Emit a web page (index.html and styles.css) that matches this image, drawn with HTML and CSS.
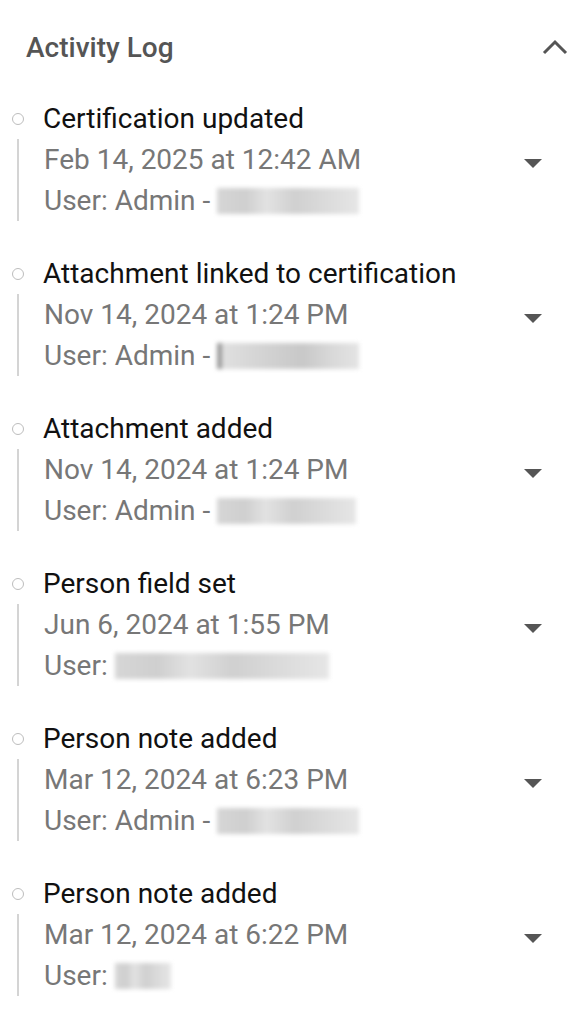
FILE: index.html
```html
<!DOCTYPE html>
<html lang="en">

<head>
    <meta charset="UTF-8">
    <meta name="viewport" content="width=device-width, initial-scale=1.0">
    <title>Activity Log</title>
    <link rel="stylesheet" href="styles.css">
</head>

<body>
    <section class="panel">
        <div class="panel-head">
            <h2>Activity Log</h2>
            <svg class="chevron" width="26" height="16" viewBox="0 0 26 16">
                <path d="M2 14 L13 3 L24 14" fill="none" stroke="#555" stroke-width="3" />
            </svg>
        </div>

        <ul class="log">
            <li class="entry">
                <div class="entry-title"><span class="dot"></span>Certification updated</div>
                <div class="entry-body">
                    <div class="row">Feb 14, 2025 at 12:42 AM <span class="caret"></span></div>
                    <div class="row">User: Admin - <span class="redacted w-142"></span></div>
                </div>
            </li>
            <li class="entry">
                <div class="entry-title"><span class="dot"></span>Attachment linked to certification</div>
                <div class="entry-body">
                    <div class="row">Nov 14, 2024 at 1:24 PM <span class="caret"></span></div>
                    <div class="row">User: Admin - <span class="redacted w-142 dark-start"></span></div>
                </div>
            </li>
            <li class="entry">
                <div class="entry-title"><span class="dot"></span>Attachment added</div>
                <div class="entry-body">
                    <div class="row">Nov 14, 2024 at 1:24 PM <span class="caret"></span></div>
                    <div class="row">User: Admin - <span class="redacted w-139"></span></div>
                </div>
            </li>
            <li class="entry">
                <div class="entry-title"><span class="dot"></span>Person field set</div>
                <div class="entry-body">
                    <div class="row">Jun 6, 2024 at 1:55 PM <span class="caret"></span></div>
                    <div class="row">User: <span class="redacted w-214"></span></div>
                </div>
            </li>
            <li class="entry">
                <div class="entry-title"><span class="dot"></span>Person note added</div>
                <div class="entry-body">
                    <div class="row">Mar 12, 2024 at 6:23 PM <span class="caret"></span></div>
                    <div class="row">User: Admin - <span class="redacted w-142"></span></div>
                </div>
            </li>
            <li class="entry">
                <div class="entry-title"><span class="dot"></span>Person note added</div>
                <div class="entry-body">
                    <div class="row">Mar 12, 2024 at 6:22 PM <span class="caret"></span></div>
                    <div class="row">User: <span class="redacted w-56"></span></div>
                </div>
            </li>
        </ul>
    </section>
</body>

</html>
```

FILE: styles.css
```css
body {
    margin: 0;
    font-family: Roboto, "Liberation Sans", Arial, sans-serif;
    background: #fff;
}

.panel-head {
    display: flex;
    align-items: center;
    justify-content: space-between;
    height: 94px;
    padding: 0 14px 0 26px;
}

.panel-head h2 {
    margin: 0;
    font-size: 28px;
    font-weight: 500;
    color: #555;
}

.chevron {
    display: block;
}

.log {
    list-style: none;
    margin: 4px 0 0;
    padding: 0;
}

.entry {
    margin-bottom: 32px;
    padding-right: 40px;
    font-size: 28px;
    line-height: 41px;
}

.entry-title {
    display: flex;
    align-items: center;
    color: #111;
}

.dot {
    width: 10px;
    height: 10px;
    border: 1px solid #bdbdbd;
    border-radius: 50%;
    margin: 0 19px 0 12px;
}

.entry-body {
    margin-left: 17px;
    padding-left: 25px;
    border-left: 2px solid #d4d4d4;
    color: #777;
}

.row {
    display: flex;
    align-items: center;
    white-space: pre;
}

.caret {
    margin-left: auto;
    margin-top: 8px;
    width: 0;
    height: 0;
    border-left: 9px solid transparent;
    border-right: 9px solid transparent;
    border-top: 9px solid #555;
}

.redacted {
    display: inline-block;
    height: 26px;
    background: linear-gradient(90deg, #d6d6d6, #cfcfcf 20%, #e2e2e2 35%, #d0d0d0 55%, #dadada 75%, #e6e6e6);
    filter: blur(2px);
}

.dark-start {
    background: linear-gradient(90deg, #9a9a9a 0 5px, #e0e0e0 5px, #d2d2d2 35%, #c8c8c8 60%, #d8d8d8 80%, #e4e4e4);
}

.w-142 { width: 142px; }
.w-139 { width: 139px; }
.w-214 { width: 214px; }
.w-56 { width: 56px; }
```
